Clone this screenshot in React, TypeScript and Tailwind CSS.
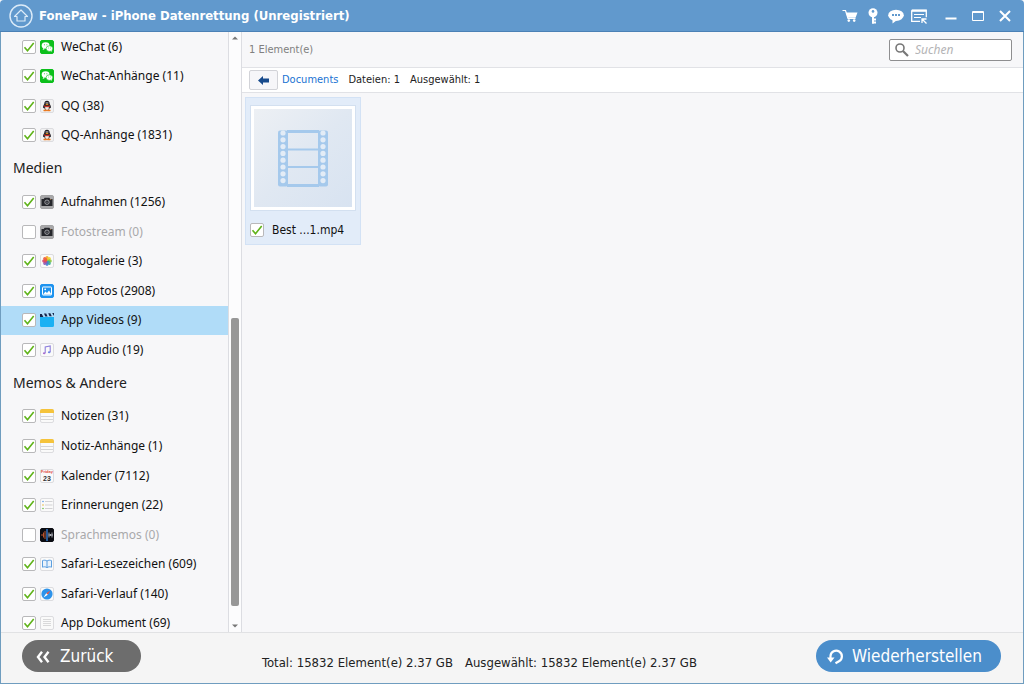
import type { ReactNode } from "react";
import clsx from "clsx";

type IconName =
  | "wechat"
  | "qq"
  | "camera"
  | "gallery"
  | "photos"
  | "videos"
  | "audio"
  | "notes"
  | "calendar"
  | "reminders"
  | "voice"
  | "bookmarks"
  | "safari"
  | "document";

type Entry = { label: string; count: number; icon: IconName; active?: boolean };
type Group = { title?: string; entries: Entry[] };

const GROUPS: Group[] = [
  {
    entries: [
      { label: "WeChat", count: 6, icon: "wechat" },
      { label: "WeChat-Anhänge", count: 11, icon: "wechat" },
      { label: "QQ", count: 38, icon: "qq" },
      { label: "QQ-Anhänge", count: 1831, icon: "qq" },
    ],
  },
  {
    title: "Medien",
    entries: [
      { label: "Aufnahmen", count: 1256, icon: "camera" },
      { label: "Fotostream", count: 0, icon: "camera" },
      { label: "Fotogalerie", count: 3, icon: "gallery" },
      { label: "App Fotos", count: 2908, icon: "photos" },
      { label: "App Videos", count: 9, icon: "videos", active: true },
      { label: "App Audio", count: 19, icon: "audio" },
    ],
  },
  {
    title: "Memos & Andere",
    entries: [
      { label: "Notizen", count: 31, icon: "notes" },
      { label: "Notiz-Anhänge", count: 1, icon: "notes" },
      { label: "Kalender", count: 7112, icon: "calendar" },
      { label: "Erinnerungen", count: 22, icon: "reminders" },
      { label: "Sprachmemos", count: 0, icon: "voice" },
      { label: "Safari-Lesezeichen", count: 609, icon: "bookmarks" },
      { label: "Safari-Verlauf", count: 140, icon: "safari" },
      { label: "App Dokument", count: 69, icon: "document" },
    ],
  },
];

const PETALS = ["#f5a623", "#f0d02c", "#8cc63f", "#3bb08f", "#3f7fd0", "#8e5bb5", "#d8456b", "#ee5a3a"];

// rounded tile behind most of the small app icons
function Tile({ children, fill = "#fafafa", stroke = "#dcdcdf" }: { children?: ReactNode; fill?: string; stroke?: string }) {
  return (
    <>
      <rect x="0.5" y="0.5" width="13" height="13" rx="1.5" fill={fill} stroke={stroke} />
      {children}
    </>
  );
}

const ICONS: Record<IconName, ReactNode> = {
  wechat: (
    <Tile fill="#0cbf1c" stroke="#0cbf1c">
      <ellipse cx="5.6" cy="5.5" rx="3.9" ry="3.3" fill="#fff" />
      <path d="M3.2 8l-.5 2 2.2-1z" fill="#fff" />
      <ellipse cx="9.4" cy="8.6" rx="3.3" ry="2.8" fill="#fff" stroke="#0cbf1c" strokeWidth="0.6" />
      <path d="M10.4 10.8l1.6 1-.3-1.8z" fill="#fff" />
      <circle cx="4.4" cy="4.7" r="0.5" fill="#0cbf1c" />
      <circle cx="6.9" cy="4.7" r="0.5" fill="#0cbf1c" />
      <circle cx="8.4" cy="8" r="0.4" fill="#0cbf1c" />
      <circle cx="10.4" cy="8" r="0.4" fill="#0cbf1c" />
    </Tile>
  ),
  qq: (
    <Tile fill="#f1f1f2">
      <path
        d="M7 1.8c-2 0-2.8 1.5-2.7 3.2C3.3 6.5 2.8 8 3.2 9.2l1-.7c.3 2 1.4 3 2.8 3s2.5-1 2.8-3l1 .7c.4-1.2-.1-2.7-1.1-4.2C9.8 3.3 9 1.8 7 1.8z"
        fill="#1d1b22"
      />
      <ellipse cx="7" cy="8.9" rx="1.9" ry="2.2" fill="#f4e9e2" />
      <path d="M4.2 6.3c1.8.9 3.8.9 5.600 0l.2 1.2c-1.9.9-4.100.9-6 0z" fill="#d43427" />
      <circle cx="6.2" cy="3.9" r="0.6" fill="#fff" />
      <circle cx="7.8" cy="3.9" r="0.6" fill="#fff" />
      <ellipse cx="7" cy="5.3" rx="1.5" ry="0.6" fill="#f39b1c" />
      <ellipse cx="5.2" cy="11.4" rx="1.9" ry="0.9" fill="#ec7a20" />
      <ellipse cx="8.8" cy="11.4" rx="1.9" ry="0.9" fill="#ec7a20" />
    </Tile>
  ),
  camera: (
    <Tile fill="#a9a9ab" stroke="#a3a3a5">
      <path d="M1.5 4h2.3l.8-1.2h4.800L10.2 4h2.300v7h-11z" fill="#25262b" />
      <circle cx="7" cy="7.2" r="2.2" fill="none" stroke="#a8a9ae" strokeWidth="0.9" />
      <circle cx="7" cy="7.2" r="0.8" fill="#6d6f76" />
      <circle cx="10.8" cy="4.4" r="0.5" fill="#d9924a" />
    </Tile>
  ),
  gallery: (
    <Tile>
      {PETALS.map((color, i) => (
        <ellipse key={color} cx="7" cy="4.5" rx="1.7" ry="2.4" fill={color} fillOpacity="0.9" transform={`rotate(${i * 45} 7 7)`} />
      ))}
    </Tile>
  ),
  photos: (
    <Tile fill="#1e93ef" stroke="#1e93ef">
      <rect x="2.5" y="3" width="9" height="8" rx="0.5" fill="none" stroke="#fff" />
      <path d="M3 10.5l2.5-3 1.5 1.5 2-2.5 2.5 4z" fill="#fff" />
      <circle cx="5.2" cy="5.3" r="0.9" fill="#fff" />
    </Tile>
  ),
  videos: (
    <>
      <path d="M0 4h14v8.500a1.500 1.500 0 01-1.500 1.500h-11A1.500 1.500 0 010 12.500z" fill="#1bb1f3" />
      <path d="M0 1h1.800l1.600 3H0zM4 .6h2.200l1.400 3H5.300zM8.200.3h2.200l1.400 3H9.500zM12.200 0H14v3z" fill="#16264a" />
    </>
  ),
  audio: (
    <Tile>
      <path d="M5.2 10V3.9l5-1V9" fill="none" stroke="#8d7fdc" strokeWidth="1.1" />
      <ellipse cx="4.2" cy="10.2" rx="1.3" ry="1" fill="#a86fd0" />
      <ellipse cx="9.2" cy="9.3" rx="1.3" ry="1" fill="#6f86e4" />
    </Tile>
  ),
  notes: (
    <Tile>
      <path d="M0 4V2a2 2 0 012-2h10a2 2 0 012 2v2z" fill="#f5c33b" />
      <path d="M1 7.5h12M1 10.5h12" stroke="#d5d5d5" />
    </Tile>
  ),
  calendar: (
    <Tile>
      <text x="7" y="4.4" textAnchor="middle" fontSize="4" fontWeight="700" fill="#e04a3a" className="font-['Liberation_Sans',sans-serif]">
        Friday
      </text>
      <text x="7" y="12.2" textAnchor="middle" fontSize="7" fontWeight="700" fill="#333" className="font-['Liberation_Sans',sans-serif]">
        23
      </text>
    </Tile>
  ),
  reminders: (
    <Tile>
      <path d="M5 3.5h7.500M5 7h7.500M5 10.500h7.500" stroke="#d2d2d4" />
      <circle cx="3" cy="3.5" r="0.8" fill="#5a9ae6" />
      <circle cx="3" cy="7" r="0.8" fill="#e8b83c" />
      <circle cx="3" cy="10.5" r="0.8" fill="#6cc04a" />
    </Tile>
  ),
  voice: (
    <Tile fill="#0b0c12" stroke="#0b0c12">
      <path d="M2 6v2M3.5 4.5v5M5 3v8" stroke="#b9542f" />
      <path d="M7 1v12" stroke="#3c8ff0" strokeWidth="1.2" />
      <path d="M9 4.5v5M10.5 6v2M12 4.5v5M8.500 7H13" stroke="#c9ccd4" strokeWidth="0.8" />
    </Tile>
  ),
  bookmarks: (
    <Tile>
      <path
        d="M7 4c-1.3-1-3-1-4.5-.4v6.600C4 9.600 5.700 9.700 7 10.600c1.300-.9 3-1 4.500-.4V3.600C10 3 8.300 3 7 4z"
        fill="#eaf3fc"
        stroke="#4b94dc"
        strokeWidth="0.9"
      />
      <path d="M7 4v6.5" stroke="#4b94dc" strokeWidth="0.9" />
    </Tile>
  ),
  safari: (
    <Tile>
      <circle cx="7" cy="7" r="5.6" fill="#2d93ea" />
      <path d="M10.5 3.5L7.800 7.800 6.200 6.200z" fill="#ee5443" />
      <path d="M3.5 10.5l2.700-4.300 1.600 1.600z" fill="#fff" />
    </Tile>
  ),
  document: (
    <Tile>
      <path d="M3 3.5h8M3 5.5h8M3 7.5h8M3 9.5h8" stroke="#d0d0d2" strokeWidth="0.8" />
    </Tile>
  ),
};

function CheckBox({ id, checked, disabled }: { id: string; checked: boolean; disabled?: boolean }) {
  return (
    <span className="grid size-3.5 shrink-0">
      <input
        id={id}
        type="checkbox"
        defaultChecked={checked}
        disabled={disabled}
        className="peer col-start-1 row-start-1 size-3.5 appearance-none rounded-xs border border-[#b8b8ba] bg-white"
      />
      <svg
        viewBox="0 0 14 14"
        aria-hidden="true"
        className="pointer-events-none invisible col-start-1 row-start-1 size-3.5 peer-checked:visible"
      >
        <path d="M2.5 7.2L5.5 10.7 11.7 3" fill="none" stroke="#5fb319" strokeWidth="1.6" />
      </svg>
    </span>
  );
}

function SidebarRow({ entry }: { entry: Entry }) {
  const empty = entry.count === 0;
  const id = `row-${entry.label.replace(/\s/g, "-")}`;
  return (
    <li className={clsx("flex flex-1 items-center pl-[21px]", entry.active && "bg-[#b0dcf8]")}>
      <CheckBox id={id} checked={!empty} disabled={empty} />
      <label htmlFor={id} className={clsx("flex items-center gap-[7px] pl-1", empty ? "text-[#a9a9ab]" : "text-[#111]")}>
        <svg viewBox="0 0 14 14" className="size-3.5 shrink-0" aria-hidden="true">
          {ICONS[entry.icon]}
        </svg>
        {entry.label} ({entry.count})
      </label>
    </li>
  );
}

function Sidebar() {
  return (
    <nav className="flex w-[227px] shrink-0 flex-col overflow-hidden font-['Noto_Sans',sans-serif] text-xs leading-5">
      {/* the last row is cut off by the footer */}
      <div className="-mb-1.5 flex flex-1 flex-col">
        {GROUPS.map((group) => (
          <section key={group.entries[0].label} className="contents">
            {group.title && <h2 className="h-[37px] shrink-0 pt-2 pl-3 text-sm leading-5 text-[#222]">{group.title}</h2>}
            <ul className="contents">
              {group.entries.map((entry) => (
                <SidebarRow key={entry.label} entry={entry} />
              ))}
            </ul>
          </section>
        ))}
      </div>
    </nav>
  );
}

function Scrollbar() {
  return (
    <div className="flex w-3.5 shrink-0 flex-col items-center border-x border-[#dcdde2] bg-[#fcfcfd] py-1" aria-hidden="true">
      <svg viewBox="0 0 6 4" className="h-1 w-1.5">
        <path d="M0 3.5h6L3 .5z" fill="#777" />
      </svg>
      <div className="flex-[278]" />
      <div className="w-2 flex-[288] rounded-xs bg-[#979797]" />
      <div className="flex-[18]" />
      <svg viewBox="0 0 6 4" className="h-1 w-1.5">
        <path d="M0 .5h6L3 3.5z" fill="#777" />
      </svg>
    </div>
  );
}

function BarButton({ label, children }: { label: string; children: ReactNode }) {
  return (
    <button type="button" aria-label={label}>
      <svg viewBox="0 0 16 16" className="size-4" fill="none" stroke="#fff" aria-hidden="true">
        {children}
      </svg>
    </button>
  );
}

function TitleBar() {
  return (
    <header className="flex h-8 shrink-0 items-center rounded-t-sm border-b border-[#4b81b6] bg-[#6199cd] pr-[11px] pl-[9px] text-white">
      <svg viewBox="0 0 24 24" className="size-6" fill="none" stroke="#dcebf8" aria-hidden="true">
        <circle cx="12" cy="12" r="11" strokeWidth="1.4" />
        <path d="M5.5 12.5L12 6l6.5 6.5H16V17H8v-4.5z" strokeWidth="1.2" strokeLinejoin="round" />
      </svg>
      <h1 className="flex-1 pl-1.5 font-['DejaVu_Sans_Condensed','DejaVu_Sans',sans-serif] text-[13px] font-bold">
        FonePaw - iPhone Datenrettung (Unregistriert)
      </h1>
      <div className="flex gap-[7px]">
        <BarButton label="Kaufen">
          <path d="M.5 2.5h3l2.5 8h7.5" strokeWidth="1.2" />
          <path d="M4 4.5h11.500L13.500 9.800H5.600z" fill="#fff" stroke="none" />
          <circle cx="6.8" cy="12.6" r="1.3" fill="#fff" stroke="none" />
          <circle cx="12.2" cy="12.6" r="1.3" fill="#fff" stroke="none" />
        </BarButton>
        <BarButton label="Registrieren">
          <circle cx="8" cy="4.8" r="4.5" fill="#fff" stroke="none" />
          <circle cx="8" cy="3.4" r="1.3" fill="#6199cd" stroke="none" />
          <path d="M8 8v7.8M8 11.5h3M8 14.5h3" strokeWidth="2" />
        </BarButton>
        <BarButton label="Feedback">
          <ellipse cx="8" cy="7.3" rx="7.8" ry="5.6" fill="#fff" stroke="none" />
          <path d="M4.5 11.5v4l4-3z" fill="#fff" stroke="none" />
          <path d="M4 7h2M7 7h2M10 7h2" stroke="#6199cd" strokeWidth="1.8" />
        </BarButton>
        <BarButton label="Menü">
          <path d="M.7 2.2h14.600v7M9 13.300H.7V2.200" strokeWidth="1.3" />
          <path d="M1 2.8h14" strokeWidth="2" />
          <path d="M3 6.5h10M3 9.5h7" />
          <path d="M15.5 15.5l-4-4M11 15v-4h4.500" strokeWidth="1.3" />
        </BarButton>
      </div>
      <div className="flex gap-[11px] pl-4">
        <BarButton label="Minimieren">
          <path d="M2.5 10.5h11" strokeWidth="2" />
        </BarButton>
        <BarButton label="Maximieren">
          <path d="M2.5 3.5h11v9h-11zM2.5 4.5h11" />
        </BarButton>
        <BarButton label="Schließen">
          <path d="M3 3l10 10M13 3L3 13" strokeWidth="2" />
        </BarButton>
      </div>
    </header>
  );
}

function FilmStrip() {
  const holes = [0, 1, 2, 3, 4, 5, 6, 7];
  return (
    <svg viewBox="0 0 50 57" className="h-[57px] w-[50px]" aria-hidden="true">
      <rect x="0" y="0.5" width="10" height="56" rx="2" fill="#a5c9ec" />
      <rect x="40" y="0.5" width="10" height="56" rx="2" fill="#a5c9ec" />
      <path d="M9 1.5h32M9 55.5h32" stroke="#a5c9ec" strokeWidth="3" />
      <path d="M9 19.5h32M9 37h32" stroke="#a5c9ec" strokeWidth="2" />
      {holes.map((i) => (
        <g key={i} fill="#e3ecf6">
          <circle cx="5" cy={3 + i * 6.8} r="2.6" />
          <circle cx="45" cy={3 + i * 6.8} r="2.6" />
        </g>
      ))}
    </svg>
  );
}

function Browser() {
  return (
    <main className="flex min-w-0 flex-1 flex-col font-['DejaVu_Sans_Condensed','DejaVu_Sans',sans-serif] text-[11px]">
      <div className="flex h-9 shrink-0 items-center justify-between border-b border-[#e1e2e6] pr-[11px] pl-[7px]">
        <p className="pt-0.5 text-[#808080]">1 Element(e)</p>
        <div className="flex h-[22px] w-[123px] items-center gap-1.5 rounded-xs border border-[#8e8e90] bg-white pl-[5px]">
          <svg viewBox="0 0 14 14" className="size-3.5 shrink-0" fill="none" stroke="#777" aria-hidden="true">
            <circle cx="5" cy="5" r="4" strokeWidth="1.6" />
            <path d="M8 8l5 5" strokeWidth="2.2" />
          </svg>
          <input
            type="search"
            aria-label="Suchen"
            placeholder="Suchen"
            className="w-full min-w-0 font-['Noto_Sans',sans-serif] text-xs italic outline-none placeholder:text-[#b4b4b6]"
          />
        </div>
      </div>
      <div className="flex h-[25px] shrink-0 items-center border-b border-[#e1e2e6] bg-white pl-[7px] text-[#222]">
        <button type="button" aria-label="Zurück" className="grid h-5 w-[29px] place-items-center rounded-xs border border-[#d2d3d8] bg-[#f6f6f9]">
          <svg viewBox="0 0 11 9" className="h-[9px] w-[11px]" aria-hidden="true">
            <path d="M0 4.5L5 0v2.500h6v4H5V9z" fill="#174a8c" />
          </svg>
        </button>
        <a href="#documents" className="pl-1 text-[#1a72d2]">
          Documents
        </a>
        <span className="pl-2.5">Dateien: 1</span>
        <span className="pl-2.5">Ausgewählt: 1</span>
      </div>
      <ul className="flex flex-1 flex-wrap content-start p-1 pl-[3px]">
        <li className="w-[116px] border border-[#d3e2f5] bg-[#e2ecf9] px-1 pt-[7px] pb-1.5">
          <div className="border border-[#d3e0f0] bg-white p-[3px]">
            <div className="grid aspect-square place-items-center bg-linear-to-br from-[#edf0f4] via-[#e0e8f2] to-[#d8e3f1]">
              <FilmStrip />
            </div>
          </div>
          <div className="flex items-center gap-2 pt-[11px]">
            <CheckBox id="file-best" checked />
            <label htmlFor="file-best" className="text-xs text-[#111]">
              Best ...1.mp4
            </label>
          </div>
        </li>
      </ul>
    </main>
  );
}

function Footer() {
  return (
    <footer className="flex h-[51px] shrink-0 items-center justify-between border-t border-[#e1e2e4] bg-[#f5f5f5] pr-[22px] pb-1 pl-[21px] font-['DejaVu_Sans_Condensed','DejaVu_Sans',sans-serif]">
      <button type="button" className="flex h-8 w-[119px] items-center gap-2.5 rounded-full bg-[#6d6d6d] pt-px pl-3.5 text-[17px] text-white">
        <svg viewBox="0 0 14 12" className="h-3 w-3.5" fill="none" stroke="#fff" strokeWidth="2.4" aria-hidden="true">
          <path d="M6 .8L2 6l4 5.200M12.500.8l-4 5.200 4 5.200" />
        </svg>
        Zurück
      </button>
      <p className="flex flex-1 gap-3 pt-3.5 pl-[121px] text-[13px] text-[#222]">
        <span>Total: 15832 Element(e) 2.37 GB</span>
        <span>Ausgewählt: 15832 Element(e) 2.37 GB</span>
      </p>
      <button type="button" className="flex h-8 w-[185px] items-center gap-2 rounded-full bg-[#4b8ecb] pt-px pl-[11px] text-[17px] text-white">
        <svg viewBox="0 0 17 17" className="size-[17px]" fill="none" stroke="#fff" aria-hidden="true">
          <path d="M3.5 10.5V8a5.700 5.700 0 118.500 5.300l-3.500 2" strokeWidth="2.2" />
          <path d="M0 9.5h7.500L3.700 14.500z" fill="#fff" stroke="none" />
        </svg>
        Wiederherstellen
      </button>
    </footer>
  );
}

export default function App() {
  return (
    <div className="flex h-screen flex-col bg-[#f7f7f9]">
      <TitleBar />
      <div className="flex min-h-0 flex-1 flex-col border border-t-0 border-[#6f9dbf]">
        <div className="flex min-h-0 flex-1">
          <Sidebar />
          <Scrollbar />
          <Browser />
        </div>
        <Footer />
      </div>
    </div>
  );
}
